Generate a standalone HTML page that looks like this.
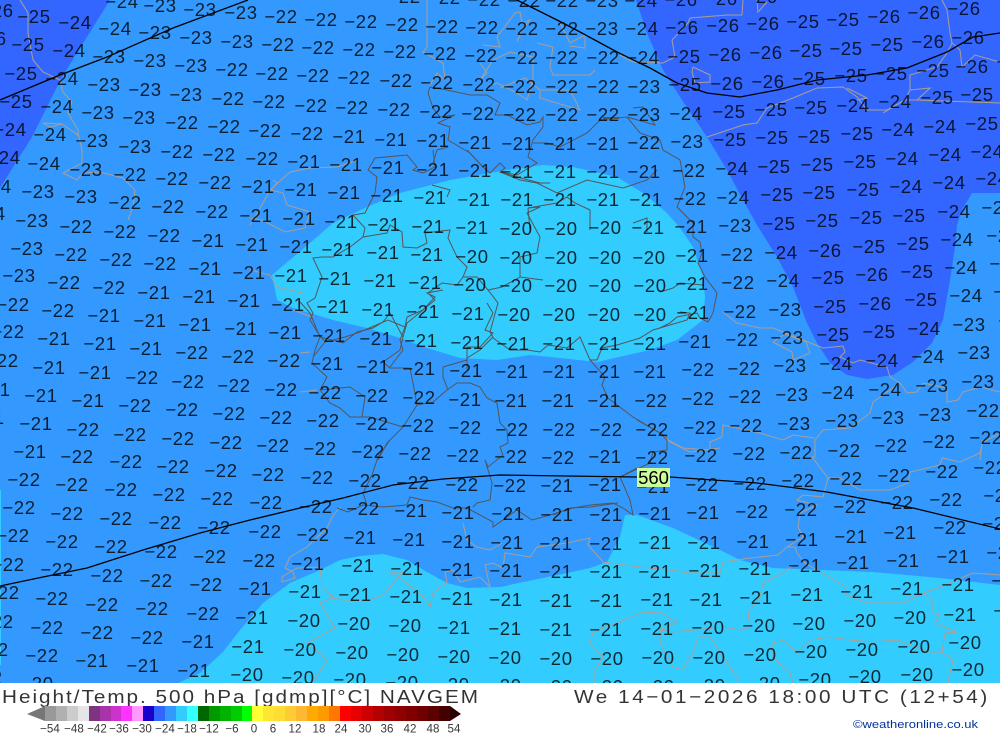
<!DOCTYPE html>
<html><head><meta charset="utf-8"><title>Height/Temp. 500 hPa NAVGEM</title>
<style>
html,body{margin:0;padding:0;background:#fff;width:1000px;height:733px;overflow:hidden}
svg{display:block}
.l text{font:18.5px "Liberation Sans",sans-serif;text-anchor:middle;letter-spacing:.6px;fill:#000;fill-opacity:.8}
.t polyline,.d polyline,.c polyline{fill:none}
.t polyline{stroke:#aa9f96;stroke-width:1}
.d polyline{stroke:#555;stroke-width:1}
.c polyline{stroke:#000;stroke-width:1.3}
.s text{font:11.6px "Liberation Sans",sans-serif;text-anchor:middle;fill:#000;fill-opacity:.8}
.h{font:18.5px "Liberation Sans",sans-serif;fill:#000;fill-opacity:.8}
</style></head><body>
<svg width="1000" height="733" viewBox="0 0 1000 733" xmlns="http://www.w3.org/2000/svg">
<rect width="1000" height="733" fill="#fff"/>
<rect width="1000" height="683" fill="#3399ff"/>
<polygon fill="#3366ff" points="0,0 110,0 62,77 32,137 0,188"/>
<polygon fill="#3366ff" points="636,0 647,33 663,70 682,100 707,137 727,170 743,200 757,225 777,257 793,287 807,323 817,343 830,363 847,375 867,379 893,375 913,362 932,343 943,320 950,280 955,247 957,225 962,210 972,193 1000,193 1000,0"/>
<polygon fill="#33ccff" points="272,275 310,243 333,223 367,207 400,193 450,180 507,170 543,165 573,167 617,177 643,193 667,213 680,228 693,247 703,277 705,297 703,320 677,340 650,350 597,362 560,358 530,355 497,360 460,358 427,348 397,337 367,328 333,320 293,308 277,300"/>
<polygon fill="#33ccff" points="178,683 200,673 223,652 240,630 263,603 290,583 320,570 340,560 360,556 383,554 407,560 427,572 447,583 467,588 500,587 533,580 567,573 590,568 607,562 620,537 625,515 637,515 673,528 720,550 740,560 773,568 873,572 940,578 1000,585 1000,683"/>
<rect x="0" y="490" width="1" height="175" fill="#33ccff"/>

<g class="t">
<polyline points="20,0 28,13 28,33 33,60 43,72 60,80 63,92 72,102 68,113 78,130 78,135 62,124 43,123 50,127 62,124"/>
<polyline points="78,133 82,150 82,163 63,173 77,180 83,173 100,172 123,178 135,190 133,207 128,220"/>
<polyline points="358,160 337,167 310,168 290,172 270,190 258,212 250,225"/>
<polyline points="273,180 277,183 271,190 283,193 287,205 310,212 305,228 285,232 262,220 250,218"/>
<polyline points="250,270 270,275 277,287 303,293"/>
<polyline points="293,310 312,317"/>
<polyline points="427,0 427,47 423,52 443,63 445,80 437,73 430,85"/>
<polyline points="483,45 500,47 497,37 515,13 520,12 522,23 530,20 522,30 517,42"/>
<polyline points="480,63 487,73 480,80 493,60 510,52 533,57 533,80 527,100 517,93 497,83 490,85"/>
<polyline points="537,43 553,47 550,67 553,75 590,75 595,70"/>
<polyline points="540,90 570,90 580,110 540,98 540,90"/>
<polyline points="560,23 570,43 585,35 585,48 570,46"/>
<polyline points="500,88 525,78 540,90"/>
<polyline points="743,0 742,15 727,15 690,18 688,23 672,40 675,57 663,63 633,62 620,55"/>
<polyline points="757,0 758,12 767,2"/>
<polyline points="693,67 710,75 710,82 695,83 692,72 693,67"/>
<polyline points="942,0 947,10 950,33 952,43 960,50 962,67 975,55 1000,62"/>
<polyline points="952,43 947,53 937,67 910,75 910,90 905,100 887,110 867,110 857,97 843,87 817,88 793,98 767,108 757,123 743,125 707,137"/>
<polyline points="847,88 867,98 857,100"/>
<polyline points="910,90 930,88 917,100 1000,103"/>
<polyline points="883,113 905,100 917,100"/>
<polyline points="723,312 737,323 760,328 773,328 803,340 823,348 843,346 845,352 840,357 853,363 860,360 887,367 890,377 900,383 907,393 917,392 923,383 947,388 947,402 958,400 963,392 980,387 1000,392"/>
<polyline points="773,342 785,334 806,342 810,353 793,360 792,352 773,342"/>
<polyline points="900,383 873,402 870,413 850,428 823,430 815,440 815,457 812,457 828,478 840,478 860,490 890,490 908,483 910,472 940,465 942,458 960,462 980,453 983,440"/>
<polyline points="815,438 793,435 783,440 760,433 723,425 722,437 710,442 710,450 683,448 668,440 660,433"/>
<polyline points="1000,433 982,443 980,460"/>
<polyline points="660,433 670,442 690,452 720,448"/>
<polyline points="828,478 823,497 803,495 797,500 817,505 800,513 798,527 803,537 787,547 778,555 750,558 723,562 720,573 690,573 670,570 640,567 603,562 588,545 590,538 567,543 537,547 530,557 505,553 503,568 493,563 485,565 490,587 480,577 460,582 453,570 445,572 447,582 433,593 430,607 423,597 403,580 390,572 403,572 383,595 370,600 343,600 332,598"/>
<polyline points="787,547 795,547 797,553 805,563 820,572 843,585 847,595 867,603 903,603 923,593 940,587 973,573 1000,575"/>
<polyline points="793,565 783,573 763,583 760,597 748,613 750,627 740,630 723,627 673,632 660,630 660,643 673,667 682,670 693,653 698,637 710,637 740,682"/>
<polyline points="640,613 660,612 677,622 660,630"/>
<polyline points="923,593 932,600 932,613 940,615 935,623 957,632 945,633 942,652 930,652 897,640 873,642 850,640 830,637 810,640 797,653 783,640 773,643 773,657 790,673 793,683"/>
<polyline points="942,652 953,660 950,673 948,683"/>
<polyline points="340,507 332,517 327,528 307,547 290,557 285,568 293,572 295,578 282,582 282,577 297,568 320,567 322,587 333,597 320,603 335,628 307,643 327,660 313,683"/>
<polyline points="463,523 467,540 477,547 490,550 502,543"/>
<polyline points="640,613 617,623 593,632 590,643 603,657 595,670 595,683"/>
<polyline points="300,392 317,390"/>
<polyline points="300,353 310,352"/>
</g>

<g class="d">
<polyline points="368,170 375,158 407,155 417,167 413,170 423,173 435,167 433,150"/>
<polyline points="467,150 483,167 490,173 500,163 505,168 500,172 517,177 540,183 550,183"/>
<polyline points="368,170 377,177 375,193 365,213 353,215 365,228 363,237 350,247 333,257 322,257 313,258 322,277 315,298 307,303 313,313 310,320 318,333 325,342 313,357"/>
<polyline points="363,237 387,233 390,225 402,232 403,247 417,248 427,243 425,233 450,230 448,238 457,257 467,267 463,277 477,277 488,290 498,303 490,332 493,337 480,350 467,358 467,370"/>
<polyline points="463,277 457,285 442,283 428,293 435,300 423,310 407,317 405,327 388,320 360,332 345,337 325,342"/>
<polyline points="405,327 400,340 403,350 390,367"/>
<polyline points="432,185 450,190 447,197"/>
<polyline points="528,208 540,207 527,213 540,237 537,253 520,257 520,277 502,287 488,290"/>
<polyline points="520,277 543,280"/>
<polyline points="430,87 447,90 470,95 487,95 500,103 495,115 507,115 527,125 540,122 543,117 543,127 533,140 528,157 537,163 517,175 500,172"/>
<polyline points="430,87 428,93 433,108 440,117 455,115 438,123 450,127 448,140 470,153 483,167"/>
<polyline points="448,147 437,150 433,163"/>
<polyline points="533,143 547,143 560,147 587,133 600,120 627,117 640,133 660,140 663,150 680,160 685,187 677,207 693,223 693,237 700,242 702,253 698,263 705,277 717,293 713,313 708,322 700,318 697,313 677,317 670,323 660,328"/>
<polyline points="633,108 643,107 655,125 627,117"/>
<polyline points="703,285 680,283 673,288 660,292"/>
<polyline points="500,172 520,180 537,183 557,193 587,180 623,188 647,180 657,170"/>
<polyline points="528,208 557,203 567,197 575,203 590,210 590,230"/>
<polyline points="528,208 530,230"/>
<polyline points="633,223 647,218 647,232"/>
<polyline points="300,302 310,313 317,330 320,337 315,350 312,363 327,377 320,390 330,403 340,408 350,417 370,417 403,427 387,443 378,460"/>
<polyline points="320,390 350,387 365,397 362,417"/>
<polyline points="403,427 417,405 413,383 410,368 390,368 383,362 400,350 403,337 390,313 383,322 373,328 357,332 343,343 320,337"/>
<polyline points="403,337 407,323 423,310 435,297 427,293 443,290"/>
<polyline points="417,405 433,402 447,390 457,383 470,383 480,387 487,398 497,403 500,423 507,430 508,443 500,447 503,455 488,467 485,460 492,483 490,500 477,503 473,507"/>
<polyline points="443,367 460,362 467,360 467,347 480,347 493,333 485,330 493,313 487,303"/>
<polyline points="443,367 443,377 448,390"/>
<polyline points="493,338 510,350 527,350 540,352 548,345 567,348 580,337 590,360 597,360 602,348 617,345 640,338 653,330 687,320 690,313 680,312"/>
<polyline points="590,360 605,377 602,385 608,398 633,417 660,433 667,440 667,450 653,452 650,463 620,477 630,500 633,515 623,508 613,503 590,505 573,508 550,515 532,520 517,510 493,527 493,522 467,508 453,508 437,502 423,500 410,497 407,505 383,507 363,505 348,512 337,508"/>
<polyline points="390,440 378,457 372,475 363,493 367,505"/>
<polyline points="637,420 667,437"/>
<polyline points="618,503 590,507 570,508 553,515"/>
<polyline points="620,477 637,468"/>
<polyline points="603,118 619,118" style="stroke-width:2"/>
</g>

<g class="c">
<polyline points="0,100 60,75 107,57 173,28 248,0"/>
<polyline points="517,0 563,23 580,32 617,52 650,68 677,83 707,93 740,97 777,90 817,80 867,75 907,68 947,52 973,37 1000,33"/>
<polyline points="0,586 43,577 87,568 143,550 200,533 250,520 300,508 343,498 393,485 443,479 500,475 567,476 637,477 670,477 757,483 827,492 913,508 1000,529"/>
</g>

<g class="l">
<text x=404 y=3>−22</text><text x=444 y=4>−22</text><text x=484 y=6>−22</text><text x=524 y=7>−22</text><text x=562 y=7>−22</text><text x=602 y=7>−23</text><text x=641 y=7>−24</text><text x=681 y=6>−26</text><text x=721 y=5>−26</text><text x=761 y=3>−26</text>
<text x=122 y=8>−24</text><text x=160 y=12>−23</text><text x=200 y=16>−23</text><text x=241 y=19>−23</text><text x=281 y=23>−22</text><text x=321 y=26>−22</text><text x=361 y=28>−22</text><text x=402 y=31>−22</text><text x=442 y=33>−22</text><text x=482 y=34>−22</text><text x=522 y=35>−22</text><text x=562 y=35>−22</text><text x=602 y=35>−23</text><text x=642 y=35>−24</text><text x=682 y=34>−26</text><text x=723 y=32>−26</text><text x=763 y=30>−26</text><text x=803 y=28>−25</text><text x=843 y=26>−25</text><text x=884 y=23>−26</text><text x=924 y=19>−26</text><text x=964 y=15>−26</text>
<text x=-3 y=17>−26</text><text x=34 y=23>−25</text><text x=75 y=29>−24</text><text x=115 y=35>−24</text><text x=155 y=39>−23</text><text x=196 y=44>−23</text><text x=237 y=48>−23</text><text x=278 y=51>−22</text><text x=318 y=54>−22</text><text x=359 y=56>−22</text><text x=400 y=58>−22</text><text x=440 y=60>−22</text><text x=481 y=62>−22</text><text x=522 y=64>−22</text><text x=562 y=64>−22</text><text x=603 y=64>−22</text><text x=643 y=64>−24</text><text x=684 y=63>−25</text><text x=725 y=61>−26</text><text x=766 y=59>−26</text><text x=806 y=57>−25</text><text x=846 y=55>−25</text><text x=887 y=51>−25</text><text x=928 y=48>−26</text><text x=968 y=44>−26</text>
<text x=-10 y=45>−26</text><text x=28 y=51>−25</text><text x=69 y=57>−24</text><text x=109 y=63>−23</text><text x=150 y=67>−23</text><text x=191 y=72>−23</text><text x=232 y=76>−22</text><text x=272 y=80>−22</text><text x=313 y=82>−22</text><text x=354 y=84>−22</text><text x=396 y=87>−22</text><text x=437 y=89>−22</text><text x=479 y=91>−22</text><text x=520 y=93>−22</text><text x=562 y=93>−22</text><text x=603 y=93>−22</text><text x=644 y=93>−23</text><text x=685 y=91>−25</text><text x=727 y=90>−26</text><text x=768 y=88>−26</text><text x=809 y=85>−25</text><text x=851 y=82>−25</text><text x=891 y=80>−25</text><text x=933 y=77>−25</text><text x=972 y=73>−26</text><text x=1013 y=68>−26</text>
<text x=21 y=80>−25</text><text x=62 y=85>−24</text><text x=104 y=91>−23</text><text x=145 y=96>−23</text><text x=186 y=101>−23</text><text x=228 y=105>−22</text><text x=269 y=108>−22</text><text x=311 y=112>−22</text><text x=352 y=114>−22</text><text x=394 y=116>−22</text><text x=436 y=118>−22</text><text x=478 y=120>−22</text><text x=520 y=121>−22</text><text x=562 y=121>−22</text><text x=603 y=121>−22</text><text x=644 y=121>−23</text><text x=686 y=120>−24</text><text x=729 y=118>−25</text><text x=771 y=116>−25</text><text x=811 y=114>−25</text><text x=853 y=112>−24</text><text x=895 y=108>−24</text><text x=937 y=104>−25</text><text x=977 y=101>−25</text>
<text x=16 y=108>−25</text><text x=57 y=113>−24</text><text x=98 y=119>−23</text><text x=139 y=124>−23</text><text x=182 y=129>−22</text><text x=224 y=133>−22</text><text x=265 y=137>−22</text><text x=307 y=140>−22</text><text x=349 y=143>−21</text><text x=391 y=146>−21</text><text x=433 y=147>−21</text><text x=475 y=149>−21</text><text x=518 y=150>−21</text><text x=560 y=150>−21</text><text x=603 y=150>−21</text><text x=644 y=149>−22</text><text x=687 y=148>−23</text><text x=730 y=146>−25</text><text x=772 y=144>−25</text><text x=814 y=143>−25</text><text x=857 y=140>−25</text><text x=898 y=136>−24</text><text x=940 y=133>−24</text><text x=982 y=130>−25</text>
<text x=10 y=136>−24</text><text x=50 y=141>−24</text><text x=92 y=147>−23</text><text x=135 y=153>−23</text><text x=177 y=158>−22</text><text x=219 y=161>−22</text><text x=262 y=165>−22</text><text x=304 y=168>−21</text><text x=346 y=171>−21</text><text x=388 y=174>−21</text><text x=433 y=176>−21</text><text x=475 y=177>−21</text><text x=517 y=178>−21</text><text x=560 y=178>−21</text><text x=603 y=178>−21</text><text x=644 y=178>−21</text><text x=689 y=177>−22</text><text x=732 y=175>−24</text><text x=774 y=173>−25</text><text x=817 y=171>−25</text><text x=860 y=168>−25</text><text x=902 y=165>−24</text><text x=945 y=161>−24</text><text x=987 y=158>−24</text>
<text x=4 y=164>−24</text><text x=44 y=170>−24</text><text x=86 y=176>−23</text><text x=130 y=181>−22</text><text x=172 y=185>−22</text><text x=215 y=189>−22</text><text x=258 y=193>−21</text><text x=301 y=196>−21</text><text x=344 y=199>−21</text><text x=387 y=202>−21</text><text x=430 y=204>−21</text><text x=474 y=206>−21</text><text x=517 y=206>−21</text><text x=560 y=206>−21</text><text x=603 y=206>−21</text><text x=646 y=206>−21</text><text x=690 y=205>−22</text><text x=733 y=204>−24</text><text x=777 y=201>−25</text><text x=819 y=199>−25</text><text x=863 y=196>−25</text><text x=906 y=193>−24</text><text x=949 y=189>−24</text><text x=992 y=185>−24</text>
<text x=-5 y=193>−24</text><text x=38 y=198>−23</text><text x=81 y=203>−23</text><text x=125 y=209>−22</text><text x=168 y=213>−22</text><text x=212 y=218>−22</text><text x=256 y=222>−21</text><text x=299 y=225>−21</text><text x=341 y=228>−21</text><text x=384 y=231>−21</text><text x=428 y=233>−21</text><text x=472 y=234>−21</text><text x=516 y=235>−20</text><text x=561 y=235>−20</text><text x=605 y=234>−20</text><text x=648 y=234>−21</text><text x=691 y=233>−21</text><text x=735 y=232>−23</text><text x=779 y=230>−25</text><text x=822 y=227>−25</text><text x=866 y=224>−25</text><text x=909 y=222>−25</text><text x=954 y=218>−24</text><text x=998 y=214>−24</text>
<text x=-11 y=220>−24</text><text x=32 y=227>−23</text><text x=76 y=233>−22</text><text x=120 y=238>−22</text><text x=164 y=242>−22</text><text x=208 y=247>−21</text><text x=252 y=251>−21</text><text x=296 y=253>−21</text><text x=338 y=256>−21</text><text x=383 y=259>−21</text><text x=427 y=261>−21</text><text x=472 y=263>−20</text><text x=516 y=264>−20</text><text x=561 y=264>−20</text><text x=605 y=264>−20</text><text x=649 y=264>−20</text><text x=692 y=262>−21</text><text x=737 y=261>−22</text><text x=781 y=259>−24</text><text x=825 y=257>−26</text><text x=869 y=253>−25</text><text x=913 y=250>−25</text><text x=957 y=246>−24</text><text x=1003 y=242>−24</text>
<text x=27 y=255>−23</text><text x=71 y=261>−22</text><text x=116 y=266>−22</text><text x=160 y=270>−22</text><text x=205 y=275>−21</text><text x=249 y=279>−21</text><text x=291 y=282>−21</text><text x=335 y=285>−21</text><text x=380 y=287>−21</text><text x=425 y=289>−21</text><text x=470 y=291>−20</text><text x=516 y=292>−20</text><text x=561 y=292>−20</text><text x=605 y=292>−20</text><text x=650 y=292>−20</text><text x=692 y=290>−21</text><text x=738 y=289>−22</text><text x=783 y=287>−24</text><text x=828 y=284>−25</text><text x=872 y=281>−26</text><text x=917 y=278>−25</text><text x=961 y=274>−24</text><text x=1006 y=270>−24</text>
<text x=19 y=282>−23</text><text x=64 y=289>−22</text><text x=109 y=294>−22</text><text x=154 y=299>−21</text><text x=199 y=303>−21</text><text x=244 y=307>−21</text><text x=288 y=311>−21</text><text x=333 y=313>−21</text><text x=378 y=316>−21</text><text x=423 y=318>−21</text><text x=468 y=320>−21</text><text x=514 y=321>−20</text><text x=559 y=321>−20</text><text x=604 y=321>−20</text><text x=650 y=321>−20</text><text x=693 y=319>−21</text><text x=740 y=318>−22</text><text x=785 y=316>−23</text><text x=830 y=313>−25</text><text x=875 y=310>−26</text><text x=921 y=306>−25</text><text x=966 y=302>−24</text><text x=1010 y=298>−24</text>
<text x=13 y=311>−22</text><text x=58 y=317>−22</text><text x=104 y=322>−21</text><text x=150 y=327>−21</text><text x=195 y=331>−21</text><text x=241 y=335>−21</text><text x=285 y=339>−21</text><text x=329 y=342>−21</text><text x=376 y=345>−21</text><text x=421 y=347>−21</text><text x=467 y=349>−21</text><text x=513 y=350>−21</text><text x=559 y=350>−21</text><text x=604 y=350>−21</text><text x=650 y=350>−21</text><text x=695 y=348>−21</text><text x=742 y=346>−22</text><text x=787 y=344>−23</text><text x=833 y=341>−25</text><text x=879 y=338>−25</text><text x=924 y=335>−24</text><text x=969 y=331>−23</text><text x=1015 y=327>−23</text>
<text x=8 y=338>−22</text><text x=54 y=345>−21</text><text x=100 y=350>−21</text><text x=146 y=355>−21</text><text x=192 y=359>−22</text><text x=238 y=363>−22</text><text x=284 y=367>−22</text><text x=327 y=370>−21</text><text x=373 y=373>−21</text><text x=419 y=375>−21</text><text x=466 y=377>−21</text><text x=512 y=378>−21</text><text x=559 y=378>−21</text><text x=604 y=378>−21</text><text x=650 y=378>−21</text><text x=698 y=376>−22</text><text x=744 y=375>−22</text><text x=790 y=372>−23</text><text x=836 y=370>−24</text><text x=882 y=367>−24</text><text x=928 y=363>−24</text><text x=974 y=359>−23</text>
<text x=2 y=367>−22</text><text x=49 y=374>−21</text><text x=95 y=379>−21</text><text x=142 y=384>−22</text><text x=188 y=388>−22</text><text x=234 y=392>−22</text><text x=281 y=396>−22</text><text x=325 y=399>−22</text><text x=372 y=402>−22</text><text x=419 y=404>−22</text><text x=465 y=406>−21</text><text x=511 y=407>−21</text><text x=558 y=407>−21</text><text x=604 y=407>−21</text><text x=651 y=407>−22</text><text x=698 y=405>−22</text><text x=745 y=403>−22</text><text x=792 y=401>−23</text><text x=838 y=399>−24</text><text x=885 y=396>−24</text><text x=932 y=392>−23</text><text x=978 y=388>−23</text>
<text x=-6 y=396>−21</text><text x=41 y=402>−21</text><text x=88 y=407>−21</text><text x=135 y=412>−22</text><text x=182 y=416>−22</text><text x=229 y=420>−22</text><text x=276 y=424>−22</text><text x=323 y=427>−22</text><text x=372 y=430>−22</text><text x=418 y=432>−22</text><text x=465 y=434>−22</text><text x=512 y=436>−22</text><text x=559 y=436>−22</text><text x=606 y=436>−22</text><text x=652 y=436>−22</text><text x=700 y=434>−22</text><text x=746 y=432>−22</text><text x=794 y=430>−23</text><text x=842 y=427>−23</text><text x=888 y=424>−23</text><text x=935 y=421>−23</text><text x=983 y=417>−22</text>
<text x=-12 y=424>−21</text><text x=36 y=430>−21</text><text x=83 y=436>−22</text><text x=130 y=441>−22</text><text x=178 y=445>−22</text><text x=226 y=449>−22</text><text x=273 y=452>−22</text><text x=320 y=455>−22</text><text x=368 y=458>−22</text><text x=415 y=460>−22</text><text x=463 y=462>−22</text><text x=511 y=463>−22</text><text x=558 y=464>−22</text><text x=605 y=463>−21</text><text x=652 y=464>−22</text><text x=701 y=462>−22</text><text x=749 y=460>−22</text><text x=796 y=459>−22</text><text x=844 y=457>−22</text><text x=891 y=452>−22</text><text x=939 y=448>−22</text><text x=986 y=444>−22</text>
<text x=30 y=458>−21</text><text x=77 y=463>−22</text><text x=126 y=468>−22</text><text x=173 y=473>−22</text><text x=221 y=477>−22</text><text x=268 y=481>−22</text><text x=317 y=484>−22</text><text x=365 y=487>−22</text><text x=413 y=489>−22</text><text x=462 y=491>−22</text><text x=510 y=492>−22</text><text x=557 y=492>−21</text><text x=605 y=491>−21</text><text x=653 y=493>−21</text><text x=702 y=491>−22</text><text x=750 y=490>−22</text><text x=798 y=487>−22</text><text x=846 y=485>−22</text><text x=894 y=482>−22</text><text x=942 y=478>−22</text><text x=990 y=474>−22</text>
<text x=24 y=486>−22</text><text x=72 y=491>−22</text><text x=121 y=496>−22</text><text x=169 y=501>−22</text><text x=217 y=505>−22</text><text x=266 y=509>−22</text><text x=316 y=513>−22</text><text x=363 y=515>−22</text><text x=411 y=517>−21</text><text x=458 y=519>−21</text><text x=508 y=520>−21</text><text x=557 y=521>−21</text><text x=606 y=521>−21</text><text x=655 y=520>−21</text><text x=703 y=519>−21</text><text x=752 y=518>−22</text><text x=801 y=516>−22</text><text x=850 y=513>−22</text><text x=897 y=509>−22</text><text x=946 y=506>−22</text><text x=1000 y=502>−22</text>
<text x=19 y=514>−22</text><text x=67 y=520>−22</text><text x=116 y=525>−22</text><text x=165 y=529>−22</text><text x=214 y=534>−22</text><text x=265 y=538>−22</text><text x=313 y=541>−22</text><text x=360 y=544>−21</text><text x=409 y=546>−21</text><text x=458 y=548>−21</text><text x=507 y=549>−21</text><text x=556 y=550>−21</text><text x=606 y=550>−21</text><text x=655 y=549>−21</text><text x=704 y=549>−21</text><text x=753 y=548>−21</text><text x=802 y=546>−21</text><text x=851 y=543>−21</text><text x=900 y=539>−21</text><text x=950 y=534>−22</text><text x=999 y=530>−22</text>
<text x=13 y=542>−22</text><text x=62 y=548>−22</text><text x=111 y=553>−22</text><text x=161 y=558>−22</text><text x=210 y=563>−22</text><text x=259 y=567>−22</text><text x=308 y=570>−21</text><text x=358 y=572>−21</text><text x=407 y=575>−21</text><text x=457 y=576>−21</text><text x=506 y=577>−21</text><text x=556 y=578>−21</text><text x=606 y=578>−21</text><text x=655 y=578>−21</text><text x=705 y=577>−21</text><text x=755 y=575>−21</text><text x=805 y=572>−21</text><text x=853 y=569>−21</text><text x=903 y=567>−21</text><text x=953 y=563>−21</text><text x=1003 y=559>−21</text>
<text x=8 y=571>−22</text><text x=57 y=576>−22</text><text x=107 y=582>−22</text><text x=156 y=587>−22</text><text x=206 y=591>−22</text><text x=255 y=595>−21</text><text x=305 y=598>−21</text><text x=355 y=601>−21</text><text x=406 y=603>−21</text><text x=457 y=605>−21</text><text x=506 y=606>−21</text><text x=556 y=607>−21</text><text x=606 y=607>−21</text><text x=657 y=606>−21</text><text x=706 y=606>−21</text><text x=756 y=604>−21</text><text x=807 y=601>−21</text><text x=857 y=598>−21</text><text x=907 y=595>−21</text><text x=958 y=591>−21</text><text x=1008 y=587>−21</text>
<text x=3 y=599>−22</text><text x=52 y=605>−22</text><text x=102 y=611>−22</text><text x=152 y=615>−22</text><text x=203 y=620>−22</text><text x=252 y=624>−21</text><text x=304 y=627>−20</text><text x=354 y=630>−20</text><text x=405 y=632>−20</text><text x=454 y=634>−21</text><text x=505 y=635>−21</text><text x=556 y=636>−21</text><text x=606 y=636>−21</text><text x=657 y=635>−21</text><text x=708 y=634>−20</text><text x=759 y=632>−20</text><text x=809 y=630>−20</text><text x=860 y=627>−20</text><text x=910 y=624>−20</text><text x=960 y=621>−21</text><text x=1010 y=617>−21</text>
<text x=-3 y=628>−22</text><text x=47 y=634>−22</text><text x=97 y=639>−22</text><text x=147 y=644>−22</text><text x=198 y=648>−21</text><text x=248 y=653>−21</text><text x=300 y=656>−20</text><text x=352 y=659>−20</text><text x=403 y=661>−20</text><text x=454 y=663>−20</text><text x=505 y=664>−20</text><text x=556 y=665>−20</text><text x=607 y=665>−20</text><text x=658 y=664>−20</text><text x=709 y=664>−20</text><text x=760 y=661>−20</text><text x=811 y=658>−20</text><text x=862 y=656>−20</text><text x=914 y=653>−20</text><text x=965 y=649>−20</text><text x=1016 y=645>−20</text>
<text x=-8 y=656>−22</text><text x=42 y=662>−22</text><text x=92 y=667>−21</text><text x=143 y=672>−21</text><text x=194 y=677>−21</text><text x=247 y=681>−20</text><text x=298 y=684>−20</text><text x=350 y=686>−20</text><text x=402 y=689>−20</text><text x=453 y=691>−20</text><text x=505 y=692>−20</text><text x=556 y=693>−20</text><text x=607 y=693>−20</text><text x=658 y=693>−20</text><text x=709 y=692>−20</text><text x=764 y=690>−20</text><text x=815 y=686>−20</text><text x=865 y=683>−20</text><text x=917 y=681>−20</text><text x=968 y=676>−20</text>
<text x=37 y=690>−20</text><text x=-14 y=684>−22</text>
</g>

<rect x="637" y="468" width="33" height="19" fill="#ccff99"/>
<text x="653.5" y="484" style="font:18.5px 'Liberation Sans',sans-serif;text-anchor:middle" fill="#000">560</text>

<rect x="0" y="683" width="1000" height="50" fill="#fff"/>
<g transform="translate(2,703) scale(1.12,1)"><text class="h" x="0" y="0" textLength="425" lengthAdjust="spacing">Height/Temp. 500 hPa [gdmp][°C] NAVGEM</text></g>
<g transform="translate(574,703) scale(1.12,1)"><text class="h" x="0" y="0" textLength="369" lengthAdjust="spacing">We 14−01−2026 18:00 UTC (12+54)</text></g>

<polygon points="27,714 45,706 45,721" fill="#777"/>
<g shape-rendering="crispEdges">
<rect x="45" y="706" width="11" height="15" fill="#999"/><rect x="56" y="706" width="11" height="15" fill="#b0b0b0"/><rect x="67" y="706" width="11" height="15" fill="#ccc"/><rect x="78" y="706" width="11" height="15" fill="#e5e5e5"/>
<rect x="89" y="706" width="11" height="15" fill="#7f3380"/><rect x="100" y="706" width="11" height="15" fill="#aa33aa"/><rect x="111" y="706" width="10" height="15" fill="#cc33cc"/><rect x="121" y="706" width="11" height="15" fill="#ff33ff"/><rect x="132" y="706" width="11" height="15" fill="#ff99ff"/>
<rect x="143" y="706" width="11" height="15" fill="#1a00cc"/><rect x="154" y="706" width="11" height="15" fill="#3366ff"/><rect x="165" y="706" width="11" height="15" fill="#3399ff"/><rect x="176" y="706" width="11" height="15" fill="#33ccff"/><rect x="187" y="706" width="11" height="15" fill="#33ffff"/>
<rect x="198" y="706" width="11" height="15" fill="#006600"/><rect x="209" y="706" width="11" height="15" fill="#009900"/><rect x="220" y="706" width="11" height="15" fill="#00b300"/><rect x="231" y="706" width="11" height="15" fill="#00cc00"/><rect x="242" y="706" width="10" height="15" fill="#00ff00"/>
<rect x="252" y="706" width="11" height="15" fill="#ffff33"/><rect x="263" y="706" width="11" height="15" fill="#ffe633"/><rect x="274" y="706" width="11" height="15" fill="#ffdd33"/><rect x="285" y="706" width="11" height="15" fill="#ffcc33"/><rect x="296" y="706" width="11" height="15" fill="#ffb833"/><rect x="307" y="706" width="11" height="15" fill="#ffaa00"/><rect x="318" y="706" width="11" height="15" fill="#ff9900"/><rect x="329" y="706" width="11" height="15" fill="#ff7700"/>
<rect x="340" y="706" width="11" height="15" fill="#ff0000"/><rect x="351" y="706" width="11" height="15" fill="#e60000"/><rect x="362" y="706" width="11" height="15" fill="#cc0000"/><rect x="373" y="706" width="11" height="15" fill="#b30000"/><rect x="384" y="706" width="11" height="15" fill="#a00000"/><rect x="395" y="706" width="11" height="15" fill="#8f0000"/><rect x="406" y="706" width="11" height="15" fill="#800000"/><rect x="417" y="706" width="11" height="15" fill="#700000"/><rect x="428" y="706" width="11" height="15" fill="#5c0000"/><rect x="439" y="706" width="11" height="15" fill="#440000"/>
</g>
<polygon points="450,706 461,714 450,721" fill="#2a0000"/>

<g class="s">
<text x="50" y="732.5">−54</text><text x="74" y="732.5">−48</text><text x="97" y="732.5">−42</text><text x="119" y="732.5">−36</text><text x="142" y="732.5">−30</text><text x="165" y="732.5">−24</text><text x="187" y="732.5">−18</text><text x="209" y="732.5">−12</text><text x="232" y="732.5">−6</text><text x="254" y="732.5">0</text><text x="273" y="732.5">6</text><text x="295" y="732.5">12</text><text x="319" y="732.5">18</text><text x="341" y="732.5">24</text><text x="365" y="732.5">30</text><text x="387" y="732.5">36</text><text x="410" y="732.5">42</text><text x="433" y="732.5">48</text><text x="454" y="732.5">54</text>
</g>
<text x="853" y="728" textLength="125" lengthAdjust="spacingAndGlyphs" style="font:11px 'Liberation Sans',sans-serif" fill="#003399">©weatheronline.co.uk</text>
</svg>
</body></html>
